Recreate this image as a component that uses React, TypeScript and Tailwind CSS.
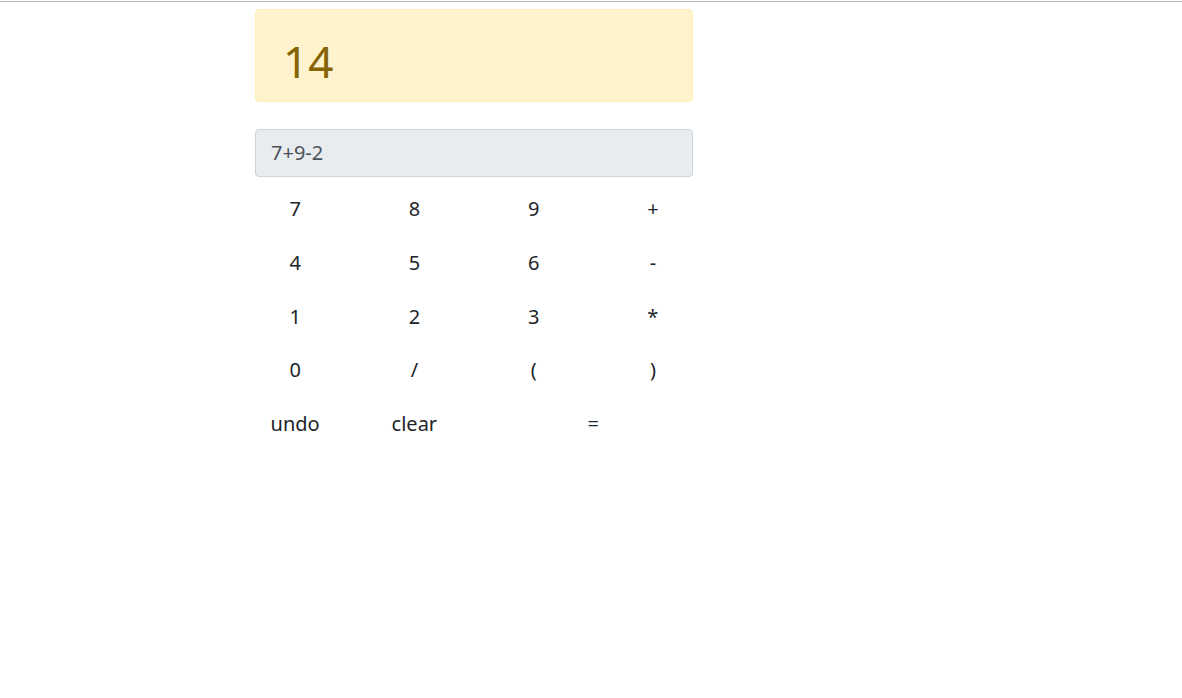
import { useState } from 'react';

const KEYS = ['7', '8', '9', '+', '4', '5', '6', '-', '1', '2', '3', '*', '0', '/', '(', ')'];

export default function App() {
  const [expr, setExpr] = useState('7+9-2');
  const [result, setResult] = useState('14');

  const press = (k: string) => setExpr((e) => e + k);
  const undo = () => setExpr((e) => e.slice(0, -1));
  const clear = () => {
    setExpr('');
    setResult('');
  };
  const evaluate = () => {
    try {
      // eslint-disable-next-line no-new-func
      setResult(String(Function(`return (${expr})`)()));
    } catch {
      setResult('error');
    }
  };

  return (
    <div className="min-h-screen bg-white pt-px font-['Noto_Sans','Open_Sans',sans-serif] text-[#212529]">
      <div className="border-t border-[#b4b4b4]">
        <div className="ml-[255px] w-[438px] pt-[7px]">
          <div className="h-[93px] rounded border border-[#ffeeba] bg-[#fff3cd] px-[27px] pt-[29px] text-[44px] leading-[44px] text-[#856404]">
            {result}
          </div>

          <div className="mt-[27px] flex h-[48px] items-center rounded border border-[#ced4da] bg-[#e9ecef] px-[15px] text-[20px] text-[#495057]">
            {expr}
          </div>

          <div className="-mx-[19.5px] mt-[8px] grid grid-cols-4 gap-y-[5.75px]">
            {KEYS.map((k) => (
              <button
                key={k}
                onClick={() => press(k)}
                className="h-[48px] text-[20px] leading-none text-[#212529]"
              >
                {k}
              </button>
            ))}
            <button onClick={undo} className="h-[48px] text-[20px] leading-none">
              undo
            </button>
            <button onClick={clear} className="h-[48px] text-[20px] leading-none">
              clear
            </button>
            <button onClick={evaluate} className="col-span-2 h-[48px] text-[20px] leading-none">
              =
            </button>
          </div>
        </div>
      </div>
    </div>
  );
}
